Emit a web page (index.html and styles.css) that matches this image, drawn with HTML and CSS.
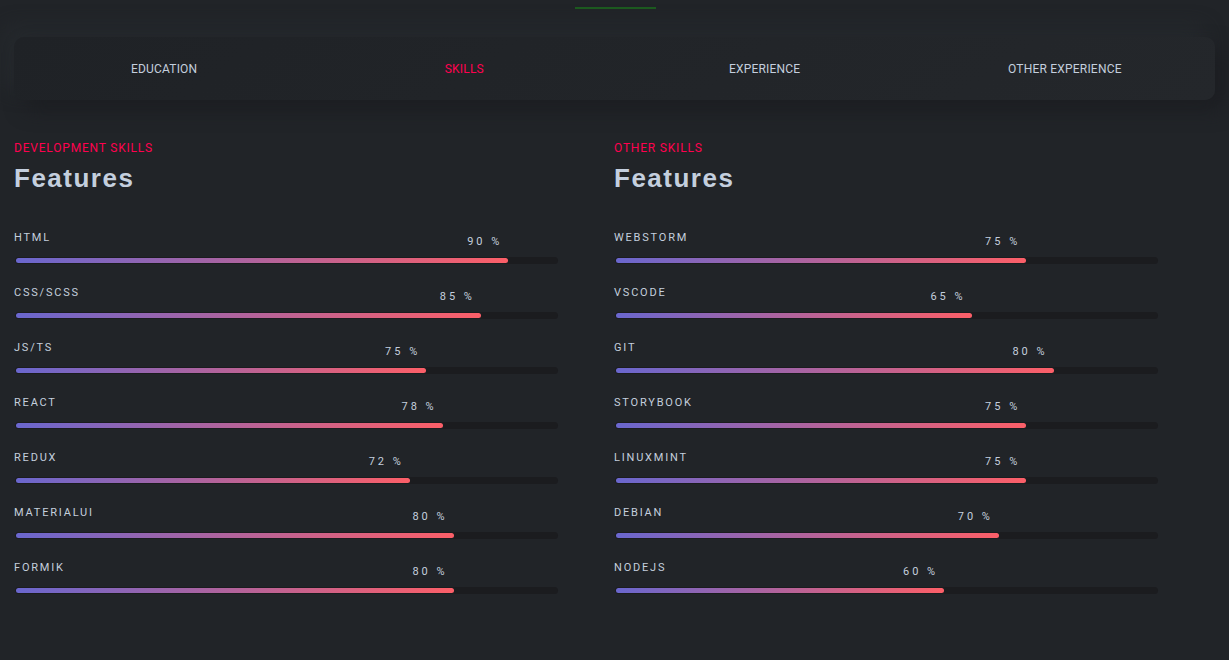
FILE: index.html
```html
<!DOCTYPE html>
<html lang="en">
<head>
<meta charset="utf-8">
<title>Skills</title>
<link rel="stylesheet" href="styles.css">
</head>
<body>
<div class="top">
  <span class="top-line"></span>
</div>
<nav class="tabs">
  <a class="tab">EDUCATION</a>
  <a class="tab active">SKILLS</a>
  <a class="tab">EXPERIENCE</a>
  <a class="tab">OTHER EXPERIENCE</a>
</nav>
<main class="columns">
  <section class="col">
    <div class="subtitle">DEVELOPMENT SKILLS</div>
    <h2 class="title">Features</h2>
    <div class="skills">
      <div class="skill"><div class="name">HTML</div><div class="track"><div class="fill" style="--p:90"><span class="pct">90 %</span></div></div></div>
      <div class="skill"><div class="name">CSS/SCSS</div><div class="track"><div class="fill" style="--p:85"><span class="pct">85 %</span></div></div></div>
      <div class="skill"><div class="name">JS/TS</div><div class="track"><div class="fill" style="--p:75"><span class="pct">75 %</span></div></div></div>
      <div class="skill"><div class="name">REACT</div><div class="track"><div class="fill" style="--p:78"><span class="pct">78 %</span></div></div></div>
      <div class="skill"><div class="name">REDUX</div><div class="track"><div class="fill" style="--p:72"><span class="pct">72 %</span></div></div></div>
      <div class="skill"><div class="name">MATERIALUI</div><div class="track"><div class="fill" style="--p:80"><span class="pct">80 %</span></div></div></div>
      <div class="skill"><div class="name">FORMIK</div><div class="track"><div class="fill" style="--p:80"><span class="pct">80 %</span></div></div></div>
    </div>
  </section>
  <section class="col">
    <div class="subtitle">OTHER SKILLS</div>
    <h2 class="title">Features</h2>
    <div class="skills">
      <div class="skill"><div class="name">WEBSTORM</div><div class="track"><div class="fill" style="--p:75"><span class="pct">75 %</span></div></div></div>
      <div class="skill"><div class="name">VSCODE</div><div class="track"><div class="fill" style="--p:65"><span class="pct">65 %</span></div></div></div>
      <div class="skill"><div class="name">GIT</div><div class="track"><div class="fill" style="--p:80"><span class="pct">80 %</span></div></div></div>
      <div class="skill"><div class="name">STORYBOOK</div><div class="track"><div class="fill" style="--p:75"><span class="pct">75 %</span></div></div></div>
      <div class="skill"><div class="name">LINUXMINT</div><div class="track"><div class="fill" style="--p:75"><span class="pct">75 %</span></div></div></div>
      <div class="skill"><div class="name">DEBIAN</div><div class="track"><div class="fill" style="--p:70"><span class="pct">70 %</span></div></div></div>
      <div class="skill"><div class="name">NODEJS</div><div class="track"><div class="fill" style="--p:60"><span class="pct">60 %</span></div></div></div>
    </div>
  </section>
</main>
</body>
</html>
```
FILE: styles.css
```css
* { box-sizing: border-box; }
html, body { height: 100%; }
body {
  margin: 0;
  background: #212428;
  color: #c4cfde;
  font-family: Roboto, "Liberation Sans", sans-serif;
  overflow: hidden;
}
.top {
  height: 37px;
  display: flex;
  justify-content: center;
  padding-top: 7px;
}
.top-line {
  display: block;
  width: 81px;
  height: 2px;
  background: #1c5a1f;
  position: relative;
  left: 1px;
}
.tabs {
  margin: 0 14px;
  width: 1201px;
  height: 63px;
  border-radius: 10px;
  background: linear-gradient(145deg, #1f2226, #24272b);
  box-shadow: 10px 10px 19px #1c1e22, -10px -10px 19px #262a2e;
  display: grid;
  grid-template-columns: repeat(4, 1fr);
  align-items: center;
}
.tab {
  text-align: center;
  font-size: 12px;
  line-height: 14px;
  letter-spacing: 0.2px;
  color: #c4cfde;
  cursor: pointer;
}
.tab.active { color: #ff014f; }
.columns {
  display: grid;
  grid-template-columns: 600px 600px;
  padding: 0 0 0 14px;
  margin-top: 41px;
}
.subtitle {
  font-size: 12px;
  line-height: 14px;
  letter-spacing: 0.8px;
  color: #ff014f;
}
.title {
  margin: 7px 0 0;
  font-family: "Liberation Sans", Arial, sans-serif;
  font-weight: 700;
  font-size: 26px;
  line-height: 32px;
  letter-spacing: 1.5px;
  color: #c4cfde;
}
.skills {
  margin-top: 37px;
  display: flex;
  flex-direction: column;
}
.skill {
  height: 55px;
}
.name {
  font-size: 11px;
  line-height: 14px;
  letter-spacing: 1.8px;
  color: #c4cfde;
}
.track {
  margin: 12px 0 0 1px;
  width: 543px;
  height: 7px;
  padding: 1px;
  border-radius: 6px;
  background: #1b1c1f;
}
.fill {
  position: relative;
  height: 5px;
  width: calc(var(--p) * 5.47px);
  border-radius: 3px;
  background: linear-gradient(to right, #6a67ce, #fc5f68);
}
.pct {
  position: absolute;
  right: 6px;
  bottom: 14px;
  font-size: 11px;
  line-height: 14px;
  letter-spacing: 3px;
  white-space: nowrap;
  color: #c4cfde;
}
```
